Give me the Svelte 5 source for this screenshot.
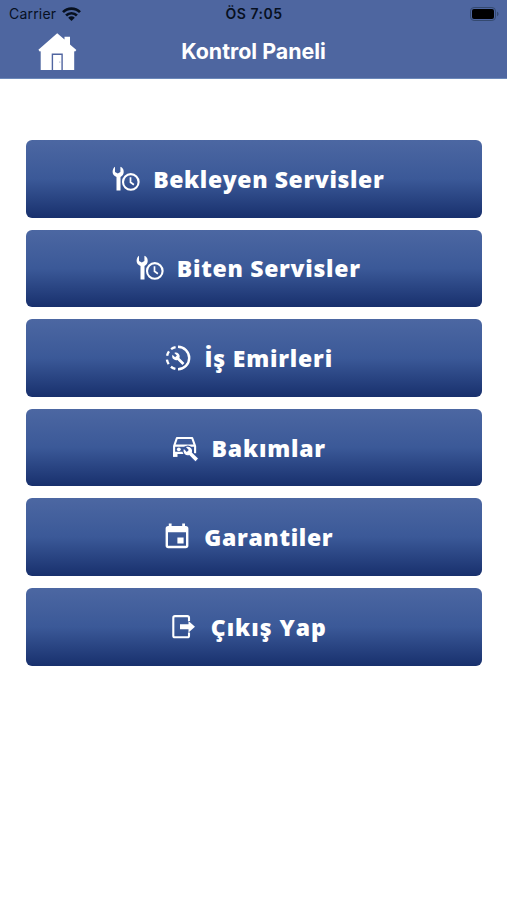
<script lang="ts">
	interface MenuItem {
		label: string;
		icon: 'service' | 'progress' | 'car' | 'calendar' | 'exit';
		spacing: number;
	}

	const items: MenuItem[] = [
		{ label: 'Bekleyen Servisler', icon: 'service', spacing: 0.6 },
		{ label: 'Biten Servisler', icon: 'service', spacing: 0.7 },
		{ label: 'İş Emirleri', icon: 'progress', spacing: 0.8 },
		{ label: 'Bakımlar', icon: 'car', spacing: 0.8 },
		{ label: 'Garantiler', icon: 'calendar', spacing: 0.65 },
		{ label: 'Çıkış Yap', icon: 'exit', spacing: 0.95 }
	];
</script>

<div class="screen">
	<header class="header">
		<div class="status">
			<div class="status__carrier">
				<span>Carrier</span>
				<svg width="19" height="14" viewBox="0 0 19 14" aria-hidden="true">
					<g fill="none" stroke="currentColor" stroke-width="2.7">
						<path d="M1 5.1a12 12 0 0 1 17 0" />
						<path d="M4.1 8.5a7.6 7.6 0 0 1 10.8 0" />
					</g>
					<path d="M6.2 10.7a4.7 4.7 0 0 1 6.6 0L9.5 14z" fill="currentColor" />
				</svg>
			</div>
			<span class="status__time">ÖS 7:05</span>
			<svg class="status__battery" width="29" height="14" viewBox="0 0 29 14" aria-hidden="true">
				<rect x=".5" y=".5" width="25" height="13" rx="3.6" fill="none" stroke="#34496f" />
				<rect x="2" y="2" width="22" height="10" rx="2" fill="#000" />
				<path d="M27 4.8c2 .6 2 3.8 0 4.4z" fill="#34496f" />
			</svg>
		</div>
		<nav class="nav">
			<svg class="nav__home" width="40" height="38" viewBox="0 0 40 38" aria-label="Ana sayfa">
				<path
					d="M19.2.3 26.5 6.6V3.7H32v7.7l6.4 5.5-1.3 1.6-.9-.2V37H2.7V18.3l-1 .2-1.3-1.7z"
					fill="#fff"
				/>
				<path d="M14.4 37V21.2h9.7V37" fill="none" stroke="#5065a0" stroke-width="1.4" />
				<circle cx="21.8" cy="29" r=".6" fill="#8594bd" />
			</svg>
			<h1 class="nav__title">Kontrol Paneli</h1>
		</nav>
	</header>

	<main class="menu">
		{#each items as item}
			<button class="menu__button" type="button">
				{#if item.icon === 'service'}
					<svg width="28" height="28" viewBox="0 0 28 28" aria-hidden="true">
						<path
							d="M3 1.8v5.1l2.8 1.6 2.6-1.6V1.8c2.3.7 3.3 2.6 3.3 5.1 0 2.2-1.2 4-3.2 5V25.6H4.5V11.9C2 10.9.6 9.1.6 6.9c0-2.4 1-4.2 2.4-5.1z"
							fill="#fff"
						/>
						<circle cx="18.8" cy="16.9" r="7.8" fill="none" stroke="#fff" stroke-width="2.1" />
						<path d="M18.5 12.3v5l3.4 2.5" fill="none" stroke="#fff" stroke-width="1.7" />
					</svg>
				{:else if item.icon === 'progress'}
					<svg width="28" height="28" viewBox="0 0 28 28" aria-hidden="true">
						<g fill="none" stroke="#fff" stroke-width="2.4">
							<path d="M14 2.8a11.2 11.2 0 0 1 0 22.4" />
							<path d="M11.6 3.1a11.2 11.2 0 0 0-4.5 2" />
							<path d="M5 7.4a11.2 11.2 0 0 0-1.9 4.3" />
							<path d="M2.9 15.6a11.2 11.2 0 0 0 1.8 4.5" />
							<path d="M6.9 22.7a11.2 11.2 0 0 0 4.5 2.2" />
						</g>
						<path
							d="m20.4 19-5-5.1c.6-1.4.3-3.1-.8-4.2-1.2-1.2-2.9-1.5-4.3-.8l2.6 2.6-1.8 1.8-2.6-2.6c-.7 1.5-.3 3.2.8 4.4 1.1 1.1 2.8 1.4 4.2.8l5 5.1z"
							fill="#fff"
						/>
					</svg>
				{:else if item.icon === 'car'}
					<svg width="28" height="28" viewBox="0 0 28 28" aria-hidden="true">
						<g fill="none" stroke="#fff" stroke-width="2.1" stroke-linejoin="round">
							<path d="M3.1 22.6V12.2L5.9 4h15.3l2.9 8.2v7" />
							<path d="M3.1 11.6h21M3.1 18.9h10.7" />
						</g>
						<path d="M2.1 18h4.4v4.9H2.1z" fill="#fff" />
						<circle cx="7.8" cy="15.3" r="1.9" fill="#fff" />
						<path
							d="m27 24.6-6.2-6.2c.6-1.5.3-3.3-1-4.5-1.3-1.3-3.3-1.6-4.9-.8l2.9 2.9-2 2-2.9-2.9c-.8 1.7-.4 3.6.8 4.9 1.3 1.3 3.1 1.6 4.6 1l6.2 6.2z"
							fill="#fff"
							stroke="#35539a"
							stroke-width="2"
							paint-order="stroke"
						/>
					</svg>
				{:else if item.icon === 'calendar'}
					<svg width="28" height="28" viewBox="0 0 28 28" aria-hidden="true">
						<path
							fill="#fff"
							fill-rule="evenodd"
							d="M5.8.6h2.8v2.3h10.6V.6H22v2.3h.8c1.6 0 2.6 1 2.6 2.5v17.3c0 1.5-1 2.5-2.6 2.5H5.1c-1.5 0-2.5-1-2.5-2.5V5.4c0-1.5 1-2.5 2.5-2.5h.7zM5 9.3v13.5h18V9.3zm9.4 5.1h6.2v6.1h-6.2z"
						/>
					</svg>
				{:else}
					<svg width="28" height="28" viewBox="0 0 28 28" aria-hidden="true">
						<path
							d="M19 8V4.7c0-1-.6-1.6-1.6-1.6H4.9c-1 0-1.6.6-1.6 1.6v18c0 1 .6 1.6 1.6 1.6h12.5c1 0 1.6-.6 1.6-1.6v-3.3"
							fill="none"
							stroke="#fff"
							stroke-width="2.1"
						/>
						<path d="M10 11.2h8.5V8l6.5 5.8-6.5 5.8v-3.3H10z" fill="#fff" />
					</svg>
				{/if}
				<span class="menu__label" style="letter-spacing: {item.spacing}px">{item.label}</span>
			</button>
		{/each}
	</main>
</div>

<style>
	:global(body) {
		background: #fff;
	}

	.screen {
		min-height: 900px;
		background: #fff;
	}

	.header {
		height: 79px;
		box-sizing: border-box;
		border-bottom: 1px solid #6b88b9;
		background: #4e66a0;
		font-family: Inter, 'Liberation Sans', sans-serif;
	}

	.status {
		display: grid;
		grid-template-columns: 1fr auto 1fr;
		align-items: center;
		height: 27px;
		padding: 0 8px 0 9px;
		color: #07101f;
		font-size: 14px;
	}

	.status__carrier {
		display: flex;
		align-items: center;
		gap: 6px;
		letter-spacing: 0.2px;
	}

	.status__time {
		font-weight: 600;
		letter-spacing: 0.5px;
	}

	.status__battery {
		justify-self: end;
	}

	.nav {
		display: grid;
		grid-template-columns: 1fr auto 1fr;
		align-items: center;
		height: 50px;
	}

	.nav__home {
		margin-left: 38px;
	}

	.nav__title {
		margin: 0;
		color: #fff;
		font-size: 21.4px;
		font-weight: 700;
		line-height: 1;
	}

	.menu {
		display: flex;
		flex-direction: column;
		gap: 12px;
		padding: 61px 25.5px 0 26px;
	}

	.menu__button {
		display: flex;
		align-items: center;
		justify-content: center;
		gap: 13px;
		height: 77.6px;
		padding: 0 11px 0 0;
		border: 0;
		border-radius: 6px;
		background: linear-gradient(#4c67a2 0%, #3b5998 50%, #18306d 100%);
		color: #fff;
	}

	.menu__label {
		font-family: 'Open Sans', 'Noto Sans', sans-serif;
		font-size: 23px;
		font-weight: 800;
		line-height: 30px;
		white-space: nowrap;
	}
</style>
